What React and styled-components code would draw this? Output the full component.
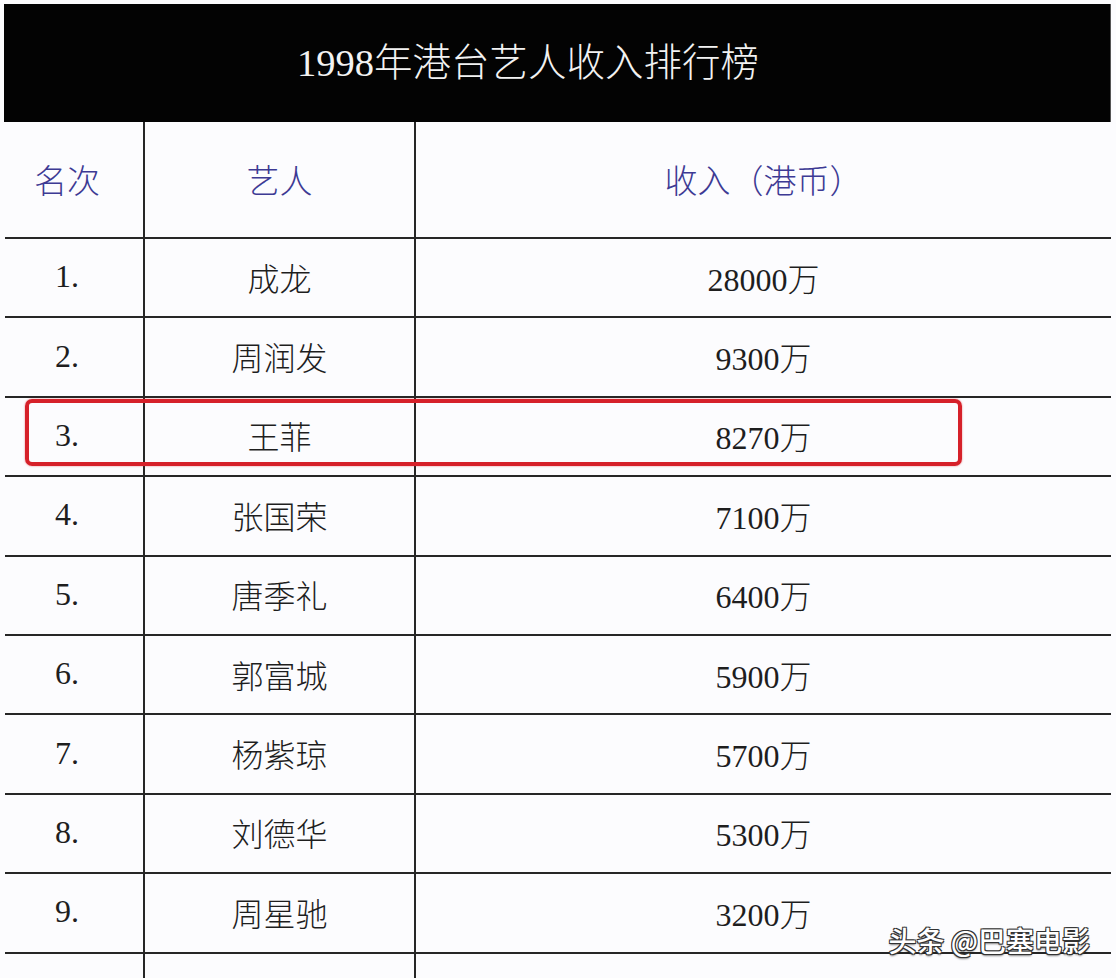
import styled, { createGlobalStyle } from "styled-components";

const GlobalStyle = createGlobalStyle`
  html, body {
    margin: 0;
    padding: 0;
    background: #fcfcfe;
  }
`;

const rows = [
  { rank: "1.", name: "成龙", income: "28000" },
  { rank: "2.", name: "周润发", income: "9300" },
  { rank: "3.", name: "王菲", income: "8270", marked: true },
  { rank: "4.", name: "张国荣", income: "7100" },
  { rank: "5.", name: "唐季礼", income: "6400" },
  { rank: "6.", name: "郭富城", income: "5900" },
  { rank: "7.", name: "杨紫琼", income: "5700" },
  { rank: "8.", name: "刘德华", income: "5300" },
  { rank: "9.", name: "周星驰", income: "3200" },
  { rank: "10.", name: "李连杰", income: "3000" },
];

const Page = styled.div`
  position: relative;
  width: 1116px;
  height: 978px;
  overflow: hidden;
  box-sizing: border-box;
  padding: 4px 5px 0 4px;
  background: #fcfcfe;
  font-family: "Liberation Serif", "Noto Sans CJK SC", serif;
`;

const TitleBar = styled.div`
  height: 118px;
  box-sizing: border-box;
  background: #030303;
  border-right: 1px solid #555;
  display: flex;
  align-items: center;
  justify-content: center;
  padding: 0 58px 8px 0;
  color: #f2f2f2;
  font-size: 38.5px;
  font-weight: 300;
`;

const Table = styled.div`
  margin-left: 1px;
`;

const Row = styled.div`
  position: relative;
  display: grid;
  grid-template-columns: 138px 271px 1fr;
  height: ${(p) => (p.$head ? "117px" : "79.4px")};
  box-sizing: border-box;
  border-bottom: 2px solid #262626;
`;

const Cell = styled.div`
  display: flex;
  align-items: center;
  justify-content: center;
  box-sizing: border-box;
  font-size: ${(p) => (p.$head ? "33px" : "32px")};
  font-weight: 300;
  color: ${(p) => (p.$head ? "#3d3a94" : "#1e1e1e")};
  border-left: ${(p) => (p.$first ? "none" : "2px solid #262626")};
  padding-right: ${(p) => (p.$first ? "14px" : "0")};
  padding-bottom: 2px;
`;

const Mark = styled.div`
  position: absolute;
  left: 20px;
  top: 1px;
  width: 937px;
  height: 67px;
  box-sizing: border-box;
  border: 4px solid #d6212a;
  border-radius: 7px;
  box-shadow: 0 0 2px rgba(214, 33, 42, 0.6);
  pointer-events: none;
`;

const Watermark = styled.div`
  position: absolute;
  right: 26px;
  top: 920px;
  font-family: "Noto Sans CJK SC", sans-serif;
  font-size: 28px;
  font-weight: 500;
  color: #ffffff;
  letter-spacing: 0px;
  text-shadow: 1px 1px 0 #333, -1px 1px 0 #333, 1px -1px 0 #333,
    -1px -1px 0 #333, 0 2px 2px rgba(0, 0, 0, 0.5);
`;

export default function App() {
  return (
    <Page>
      <GlobalStyle />
      <TitleBar>1998年港台艺人收入排行榜</TitleBar>
      <Table>
        <Row $head>
          <Cell $head $first>名次</Cell>
          <Cell $head>艺人</Cell>
          <Cell $head>收入（港币）</Cell>
        </Row>
        {rows.map((r) => (
          <Row key={r.rank}>
            <Cell $first>{r.rank}</Cell>
            <Cell>{r.name}</Cell>
            <Cell>{r.income}万</Cell>
            {r.marked && <Mark />}
          </Row>
        ))}
      </Table>
      <Watermark>头条 @巴塞电影</Watermark>
    </Page>
  );
}
